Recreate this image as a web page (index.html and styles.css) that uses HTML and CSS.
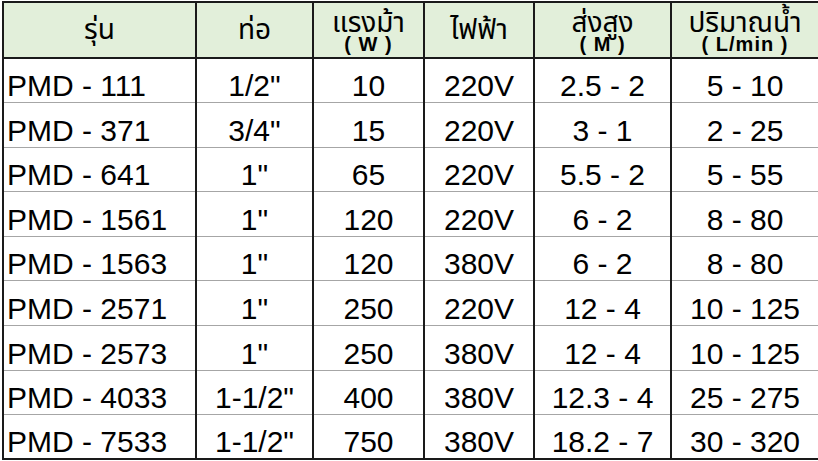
FILE: index.html
```html
<!DOCTYPE html>
<html lang="th">
<head>
<meta charset="utf-8">
<title>PMD</title>
<link rel="stylesheet" href="styles.css">
</head>
<body>
<table class="spec">
  <colgroup>
    <col class="c1"><col class="c2"><col class="c3"><col class="c4"><col class="c5"><col class="c6">
  </colgroup>
  <thead>
    <tr>
      <th><span class="th1">รุ่น</span></th>
      <th><span class="th1">ท่อ</span></th>
      <th><span class="th2">แรงม้า</span><span class="unit">( W )</span></th>
      <th><span class="th1">ไฟฟ้า</span></th>
      <th><span class="th2">ส่งสูง</span><span class="unit">( M )</span></th>
      <th><span class="th2">ปริมาณน้ำ</span><span class="unit">( L/min )</span></th>
    </tr>
  </thead>
  <tbody>
    <tr><td class="model">PMD - 111</td><td>1/2"</td><td>10</td><td>220V</td><td>2.5 - 2</td><td>5 - 10</td></tr>
    <tr><td class="model">PMD - 371</td><td>3/4"</td><td>15</td><td>220V</td><td>3 - 1</td><td>2 - 25</td></tr>
    <tr><td class="model">PMD - 641</td><td>1"</td><td>65</td><td>220V</td><td>5.5 - 2</td><td>5 - 55</td></tr>
    <tr><td class="model">PMD - 1561</td><td>1"</td><td>120</td><td>220V</td><td>6 - 2</td><td>8 - 80</td></tr>
    <tr><td class="model">PMD - 1563</td><td>1"</td><td>120</td><td>380V</td><td>6 - 2</td><td>8 - 80</td></tr>
    <tr><td class="model">PMD - 2571</td><td>1"</td><td>250</td><td>220V</td><td>12 - 4</td><td>10 - 125</td></tr>
    <tr><td class="model">PMD - 2573</td><td>1"</td><td>250</td><td>380V</td><td>12 - 4</td><td>10 - 125</td></tr>
    <tr><td class="model">PMD - 4033</td><td>1-1/2"</td><td>400</td><td>380V</td><td>12.3 - 4</td><td>25 - 275</td></tr>
    <tr class="last"><td class="model">PMD - 7533</td><td>1-1/2"</td><td>750</td><td>380V</td><td>18.2 - 7</td><td>30 - 320</td></tr>
  </tbody>
</table>
</body>
</html>
```

FILE: styles.css
```css
html, body {
  margin: 0;
  padding: 0;
  background: #ffffff;
}

.spec {
  border-collapse: collapse;
  table-layout: fixed;
  width: 816px;
  margin: 1px 0 0 2px;
  font-family: "Liberation Sans", Arial, sans-serif;
  color: #000;
}

.c1 { width: 193px; }
.c2 { width: 117px; }
.c3 { width: 111px; }
.c4 { width: 110px; }
.c5 { width: 137px; }
.c6 { width: 148px; }

.spec th,
.spec td {
  border-left: 2px solid #1a1a1a;
  border-right: 2px solid #1a1a1a;
  padding: 0;
}

.spec thead tr {
  height: 56px;
}

.spec th {
  background: #e2efda;
  border-top: 2px solid #1a1a1a;
  border-bottom: 2px solid #1a1a1a;
  font-weight: normal;
  text-align: center;
  vertical-align: top;
  font-family: "Noto Sans Thai", "Loma", "Tahoma", "Liberation Sans", "DejaVu Sans", sans-serif;
}

.th1 {
  display: block;
  font-size: 28px;
  line-height: 28px;
  padding-top: 14px;
}

.th2 {
  display: block;
  font-size: 28px;
  line-height: 24px;
  padding-top: 9px;
}

.unit {
  display: block;
  font-family: "Liberation Sans", Arial, sans-serif;
  font-weight: bold;
  font-size: 20px;
  letter-spacing: 1px;
  line-height: 17px;
}

.spec tbody tr {
  height: 44.6px;
}

.spec td {
  border-bottom: 1px solid #a6a6a6;
  font-size: 30px;
  line-height: 32px;
  text-align: center;
  vertical-align: bottom;
}

.spec td.model {
  text-align: left;
  padding-left: 3px;
}

.spec tr.last td {
  border-bottom: 2px solid #1a1a1a;
}
```
